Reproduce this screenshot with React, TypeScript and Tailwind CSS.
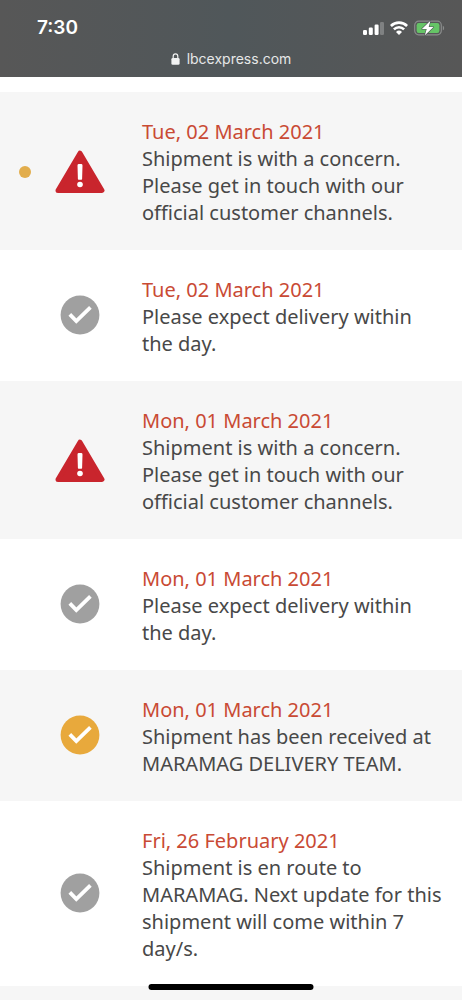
import clsx from "clsx";

type Status = "concern" | "done" | "current";

type Update = {
  date: string;
  text: string;
  status: Status;
  latest?: boolean;
};

const updates: Update[] = [
  {
    date: "Tue, 02 March 2021",
    text: "Shipment is with a concern. Please get in touch with our official customer channels.",
    status: "concern",
    latest: true,
  },
  {
    date: "Tue, 02 March 2021",
    text: "Please expect delivery within the day.",
    status: "done",
  },
  {
    date: "Mon, 01 March 2021",
    text: "Shipment is with a concern. Please get in touch with our official customer channels.",
    status: "concern",
  },
  {
    date: "Mon, 01 March 2021",
    text: "Please expect delivery within the day.",
    status: "done",
  },
  {
    date: "Mon, 01 March 2021",
    text: "Shipment has been received at MARAMAG DELIVERY TEAM.",
    status: "current",
  },
  {
    date: "Fri, 26 February 2021",
    text: "Shipment is en route to MARAMAG. Next update for this shipment will come within 7 day/s.",
    status: "done",
  },
];

function SignalIcon() {
  return (
    <svg width="21" height="14" viewBox="0 0 21 14" fill="#fff" aria-hidden>
      <rect x="0" y="9" width="4" height="5" rx="1.2" />
      <rect x="5.8" y="6.6" width="4" height="7.4" rx="1.2" />
      <rect x="11.6" y="3.6" width="4" height="10.4" rx="1.2" />
      <rect x="17" y="1" width="4" height="13" rx="1.2" opacity="0.25" />
    </svg>
  );
}

function WifiIcon() {
  return (
    <svg width="18" height="14" viewBox="0 0 18 14" fill="none" stroke="#fff" strokeWidth="2.6" aria-hidden>
      <path d="M.9 5a11.4 11.4 0 0 1 16.2 0" />
      <path d="M3.9 8.4a7.2 7.2 0 0 1 10.2 0" />
      <path d="M9 14 6 11a4.3 4.3 0 0 1 6 0Z" fill="#fff" stroke="none" />
    </svg>
  );
}

function BatteryIcon() {
  return (
    <svg width="31" height="16" viewBox="0 0 31 16" aria-hidden>
      <rect x="0.7" y="1.2" width="26.6" height="13.6" rx="4" fill="none" stroke="#8a8c8c" strokeWidth="1.2" />
      <rect x="2.6" y="3" width="22.8" height="10" rx="2.2" fill="#65c466" />
      <path d="M28.8 5.7c1.8.7 1.8 3.9 0 4.6Z" fill="#8a8c8c" />
      <path
        d="M16.4.8 7.9 8.9h4.8l-1.8 6.3 8.6-8.1h-4.8Z"
        fill="#fff"
        stroke="#53595a"
        strokeWidth="1.2"
        paintOrder="stroke"
        strokeLinejoin="round"
      />
    </svg>
  );
}

function LockIcon() {
  return (
    <svg width="9" height="12" viewBox="0 0 9 12" aria-hidden>
      <rect x="0.4" y="5" width="8.2" height="6.8" rx="1.3" fill="#f1f2f2" />
      <path d="M2.2 5.5V3.2a2.3 2.3 0 0 1 4.6 0v2.3" fill="none" stroke="#f1f2f2" strokeWidth="1.2" />
    </svg>
  );
}

function StatusIcon({ status }: { status: Status }) {
  if (status === "concern") {
    return (
      <svg width="50" height="44" viewBox="0 0 50 44" role="img" aria-label="Concern">
        <path
          d="M25 3.2 47 40.4H3Z"
          fill="#c9252d"
          stroke="#c9252d"
          strokeWidth="5"
          strokeLinejoin="round"
        />
        <path d="M22.5 15.5q0-1.4 1.4-1.4h2.2q1.4 0 1.4 1.4l-.4 13.5q0 .8-.8.8h-2.6q-.8 0-.8-.8Z" fill="#fff" />
        <circle cx="25" cy="34.5" r="2.8" fill="#fff" />
      </svg>
    );
  }
  return (
    <svg className="mb-1" width="40" height="40" viewBox="0 0 40 40" role="img" aria-label="Completed">
      <circle cx="20" cy="20" r="19.4" fill={status === "current" ? "#e8a93c" : "#a0a0a0"} />
      <path d="m9.8 19.4 6.5 6.6L30.4 12.4" fill="none" stroke="#fff" strokeWidth="3.8" />
    </svg>
  );
}

function UpdateRow({ update }: { update: Update }) {
  return (
    <li className="flex items-center pt-[26px] pr-5 pb-6 odd:bg-[#f6f6f6]">
      <div className="flex w-[50px] shrink-0 justify-center">
        <span className={clsx("size-3 rounded-full", update.latest && "bg-[#e2ad4c]")} />
      </div>
      <div className="flex w-[60px] shrink-0 justify-center">
        <StatusIcon status={update.status} />
      </div>
      <div className="ml-8 min-w-0 flex-1 text-[20px] leading-[27px]">
        <time className="block text-[#c94a34]">{update.date}</time>
        <p className="text-[#484848]">{update.text}</p>
      </div>
    </li>
  );
}

export default function App() {
  return (
    <div className="flex h-screen flex-col overflow-hidden bg-white font-['Noto_Sans',sans-serif]">
      <header className="shrink-0 bg-linear-to-r from-[#575757] via-[#50575a] to-[#575757] pb-2 font-['Inter',sans-serif]">
        <div className="flex items-center justify-between pt-4 pr-[17px] pl-[37px]">
          <span className="text-[19px] leading-6 font-semibold text-white">7:30</span>
          <div className="flex items-center gap-1.5">
            <SignalIcon />
            <WifiIcon />
            <BatteryIcon />
          </div>
        </div>
        <div className="mt-2 flex items-center justify-center gap-[7px] text-[14px] leading-[21px] text-[#e6e8e8]">
          <LockIcon />
          <span>lbcexpress.com</span>
        </div>
      </header>

      <main className="min-h-0 flex-1 overflow-hidden pt-[15px]">
        <ol>
          {updates.map((update, i) => (
            <UpdateRow key={i} update={update} />
          ))}
          <li className="h-12 bg-[#f6f6f6]" aria-hidden />
        </ol>
      </main>

      <div className="fixed bottom-2.5 left-1/2 h-1.5 w-[165px] -translate-x-1/2 rounded-full bg-black" />
    </div>
  );
}
